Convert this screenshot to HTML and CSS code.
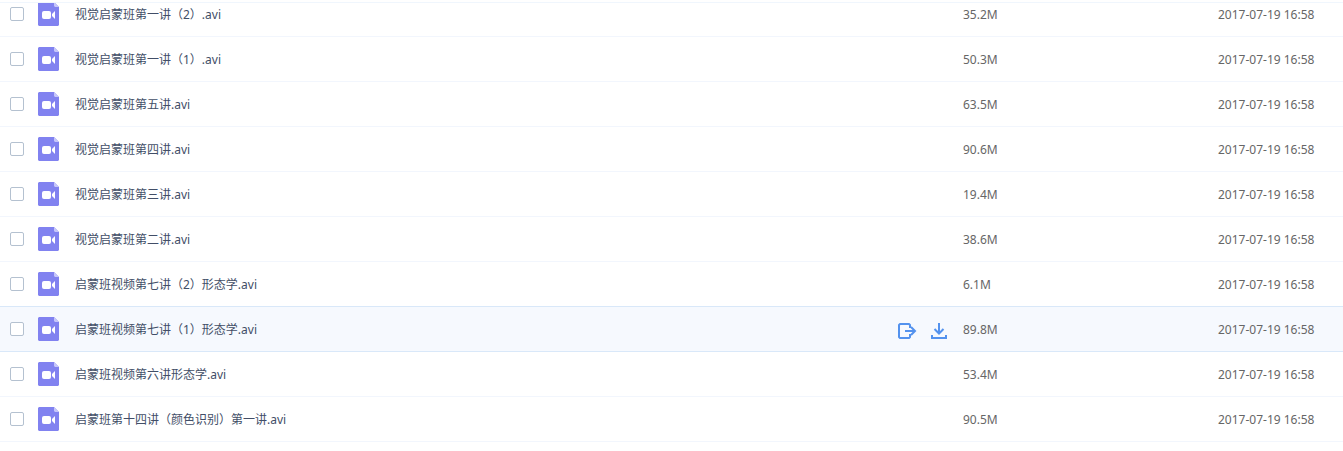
FILE: index.html
```html
<!DOCTYPE html>
<html lang="zh-CN">
<head>
    <meta charset="utf-8">
    <title>文件列表</title>
    <link rel="stylesheet" href="styles.css">
</head>
<body>
    <!-- shared icons -->
    <svg class="icon-defs" width="0" height="0" aria-hidden="true">
        <symbol id="icon-video" viewBox="0 0 21 24">
            <path fill="#8182f0" d="M1 0h15l5 5v18l-1 1H1l-1-1V1z"/>
            <path fill="#c6c6fa" d="M16 0l5 5h-4l-1-1z"/>
            <rect fill="#fff" x="4" y="9" width="9" height="8" rx="2"/>
            <path fill="#fff" d="M17 9v8l-3-3v-2z"/>
        </symbol>
        <symbol id="icon-share" viewBox="0 0 20 18">
            <path fill="none" stroke="#5392ee" stroke-width="2" stroke-linejoin="round" d="M13 6V3L12 2H3L2 3v12l1 1h9l1-1v-3"/>
            <path fill="none" stroke="#5392ee" stroke-width="2" d="M8 9h10M14 5l4 4-4 4"/>
        </symbol>
        <symbol id="icon-download" viewBox="0 0 16 18">
            <path fill="none" stroke="#5392ee" stroke-width="2" d="M8 1v10M3.500 7L8 11.500 12.500 7M1 13v3h14v-3"/>
        </symbol>
    </svg>

    <div class="file-list">
        <table class="file-table">
            <colgroup>
                <col class="col-check">
                <col class="col-name">
                <col class="col-size">
                <col class="col-date">
            </colgroup>
            <tbody>
                <tr>
                    <td class="check"><input type="checkbox" id="file1"></td>
                    <td><div class="name"><svg class="file-icon"><use href="#icon-video"/></svg><label for="file1">视觉启蒙班第一讲（2）.avi</label></div></td>
                    <td class="info">35.2M</td>
                    <td class="info">2017-07-19 16:58</td>
                </tr>
                <tr>
                    <td class="check"><input type="checkbox" id="file2"></td>
                    <td><div class="name"><svg class="file-icon"><use href="#icon-video"/></svg><label for="file2">视觉启蒙班第一讲（1）.avi</label></div></td>
                    <td class="info">50.3M</td>
                    <td class="info">2017-07-19 16:58</td>
                </tr>
                <tr>
                    <td class="check"><input type="checkbox" id="file3"></td>
                    <td><div class="name"><svg class="file-icon"><use href="#icon-video"/></svg><label for="file3">视觉启蒙班第五讲.avi</label></div></td>
                    <td class="info">63.5M</td>
                    <td class="info">2017-07-19 16:58</td>
                </tr>
                <tr>
                    <td class="check"><input type="checkbox" id="file4"></td>
                    <td><div class="name"><svg class="file-icon"><use href="#icon-video"/></svg><label for="file4">视觉启蒙班第四讲.avi</label></div></td>
                    <td class="info">90.6M</td>
                    <td class="info">2017-07-19 16:58</td>
                </tr>
                <tr>
                    <td class="check"><input type="checkbox" id="file5"></td>
                    <td><div class="name"><svg class="file-icon"><use href="#icon-video"/></svg><label for="file5">视觉启蒙班第三讲.avi</label></div></td>
                    <td class="info">19.4M</td>
                    <td class="info">2017-07-19 16:58</td>
                </tr>
                <tr>
                    <td class="check"><input type="checkbox" id="file6"></td>
                    <td><div class="name"><svg class="file-icon"><use href="#icon-video"/></svg><label for="file6">视觉启蒙班第二讲.avi</label></div></td>
                    <td class="info">38.6M</td>
                    <td class="info">2017-07-19 16:58</td>
                </tr>
                <tr>
                    <td class="check"><input type="checkbox" id="file7"></td>
                    <td><div class="name"><svg class="file-icon"><use href="#icon-video"/></svg><label for="file7">启蒙班视频第七讲（2）形态学.avi</label></div></td>
                    <td class="info">6.1M</td>
                    <td class="info">2017-07-19 16:58</td>
                </tr>
                <tr class="active">
                    <td class="check"><input type="checkbox" id="file8"></td>
                    <td>
                        <div class="name">
                            <svg class="file-icon"><use href="#icon-video"/></svg>
                            <label for="file8">启蒙班视频第七讲（1）形态学.avi</label>
                            <div class="actions">
                                <button type="button" aria-label="分享"><svg width="20" height="18"><use href="#icon-share"/></svg></button>
                                <button type="button" aria-label="下载"><svg width="16" height="18"><use href="#icon-download"/></svg></button>
                            </div>
                        </div>
                    </td>
                    <td class="info">89.8M</td>
                    <td class="info">2017-07-19 16:58</td>
                </tr>
                <tr>
                    <td class="check"><input type="checkbox" id="file9"></td>
                    <td><div class="name"><svg class="file-icon"><use href="#icon-video"/></svg><label for="file9">启蒙班视频第六讲形态学.avi</label></div></td>
                    <td class="info">53.4M</td>
                    <td class="info">2017-07-19 16:58</td>
                </tr>
                <tr>
                    <td class="check"><input type="checkbox" id="file10"></td>
                    <td><div class="name"><svg class="file-icon"><use href="#icon-video"/></svg><label for="file10">启蒙班第十四讲（颜色识别）第一讲.avi</label></div></td>
                    <td class="info">90.5M</td>
                    <td class="info">2017-07-19 16:58</td>
                </tr>
            </tbody>
        </table>
    </div>
</body>
</html>
```
FILE: styles.css
```css
body {
    margin: 0;
    padding-top: 2px;
    background-color: #fff;
    color: #666;
    font-family: "Noto Sans", "Noto Sans CJK SC", sans-serif;
    font-size: 12px;
    line-height: 18px;
}

.icon-defs {
    position: absolute;
}

.file-list {
    border-top: 1px solid #f0f6fd;
    overflow: hidden;
}

/* the list is scrolled a little, so the first row is cut off */
.file-table {
    width: 100%;
    margin-top: -12px;
    table-layout: fixed;
    border-collapse: separate;
    border-spacing: 0;
    border-bottom: 1px solid #f2f6fd;
}

.col-check {
    width: 38px;
}

.col-size {
    width: 255px;
}

.col-date {
    width: 125px;
}

td {
    height: 44px;
    padding: 0;
    border-top: 1px solid #f2f6fd;
    white-space: nowrap;
}

td.info {
    height: 42px;
    padding-top: 2px;
}

.active td {
    background-color: #f6f9fe;
    border-top-color: #d9e8f9;
}

.active + tr td {
    border-top-color: #d9e8f9;
}

td.check {
    padding-left: 10px;
}

input[type="checkbox"] {
    display: block;
    appearance: none;
    width: 14px;
    height: 14px;
    margin: 0;
    border: 1px solid #b4c1d0;
    border-radius: 2px;
    background-color: #fff;
}

.name {
    display: flex;
    align-items: center;
    color: #424e67;
}

.name label {
    padding-top: 2px;
}

.file-icon {
    width: 21px;
    height: 24px;
    margin-right: 16px;
}

.actions {
    display: flex;
    gap: 14px;
    margin-left: auto;
    padding: 4px 16px 0 0;
}

button {
    display: block;
    padding: 0;
    border: none;
    background: none;
    cursor: pointer;
}

button svg {
    display: block;
}
```
